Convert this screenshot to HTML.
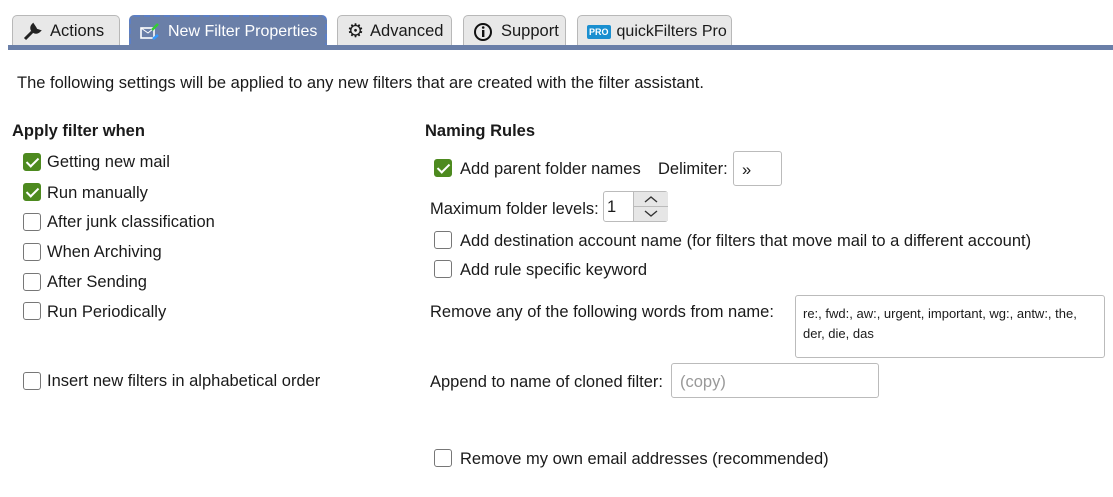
<!DOCTYPE html><html><head><style>
body{margin:0;width:1113px;height:497px;background:#fff;font-family:"Liberation Sans",sans-serif;font-size:16.5px;color:#1a1a1a;position:relative;overflow:hidden}
.a{position:absolute;white-space:nowrap}
.tab{position:absolute;top:15px;height:30px;border:1px solid #b8b8b8;border-bottom:none;border-radius:5px 5px 0 0;background:#e8e8e8;box-sizing:border-box;display:flex;align-items:center;padding-left:9px;padding-top:2px;gap:8px;font-size:16.5px}
.cb{position:absolute;width:18px;height:18px;border:1px solid #777;border-radius:3px;box-sizing:border-box;background:#fff}
.cb.on{background:#4d8a1f;border-color:#4d8a1f}
.cb.on:after{content:"";position:absolute;left:5px;top:1px;width:5px;height:10px;border:solid #fff;border-width:0 2.5px 2.5px 0;transform:rotate(45deg)}
.in{position:absolute;border:1px solid #bbb;border-radius:3px;box-sizing:border-box;background:#fff}
</style></head><body>
<div class="tab" style="left:12px;width:108px"><svg width="20" height="20" viewBox="0 0 20 20"><path d="M3 17l7-7M11 3a4 4 0 1 0 6 6l-3-1-1-2z" stroke="#222" stroke-width="3" fill="#222"/></svg>Actions</div>
<div class="tab" style="left:129px;width:198px;background:#6a7fa8;color:#fff;border:2px dashed #5b7fc7;border-bottom:none;font-size:16px"><svg width="20" height="18" viewBox="0 0 20 18"><rect x="1" y="5" width="13" height="10" fill="none" stroke="#fff" stroke-width="1.6"/><path d="M1 5l7 5 6-5" stroke="#fff" fill="none"/><path d="M12 7l6-6" stroke="#3c3" stroke-width="2.5"/><path d="M13 16l5-4" stroke="#39f" stroke-width="2.5"/></svg>New Filter Properties</div>
<div class="tab" style="left:337px;width:115px;gap:6px"><span style="font-size:19px">⚙</span>Advanced</div>
<div class="tab" style="left:463px;width:103px"><svg width="20" height="20"><circle cx="10" cy="10" r="8" fill="none" stroke="#111" stroke-width="2"/><rect x="9" y="8" width="2.4" height="7" fill="#111"/><circle cx="10.2" cy="5.5" r="1.3" fill="#111"/></svg>Support</div>
<div class="tab" style="left:577px;width:155px;gap:6px;font-size:16px"><span style="background:#1a8fd0;color:#fff;font-size:9px;font-weight:bold;padding:2px 2px;border-radius:2px">PRO</span>quickFilters Pro</div>
<div class="a" style="left:8px;top:45px;width:1105px;height:5px;background:#6a7fa8"></div>
<div class="a" style="left:17px;top:74px">The following settings will be applied to any new filters that are created with the filter assistant.</div>
<div class="a" style="left:12px;top:122px;font-weight:bold">Apply filter when</div>
<div class="cb on" style="left:23px;top:153px"></div><div class="a" style="left:47px;top:153px">Getting new mail</div>
<div class="cb on" style="left:23px;top:183px"></div><div class="a" style="left:47px;top:184px">Run manually</div>
<div class="cb" style="left:23px;top:213px"></div><div class="a" style="left:47px;top:213px">After junk classification</div>
<div class="cb" style="left:23px;top:243px"></div><div class="a" style="left:47px;top:243px">When Archiving</div>
<div class="cb" style="left:23px;top:273px"></div><div class="a" style="left:47px;top:273px">After Sending</div>
<div class="cb" style="left:23px;top:302px"></div><div class="a" style="left:47px;top:303px">Run Periodically</div>
<div class="cb" style="left:23px;top:372px"></div><div class="a" style="left:47px;top:372px">Insert new filters in alphabetical order</div>
<div class="a" style="left:425px;top:122px;font-weight:bold">Naming Rules</div>
<div class="cb on" style="left:434px;top:159px"></div><div class="a" style="left:460px;top:160px">Add parent folder names</div>
<div class="a" style="left:658px;top:160px">Delimiter:</div>
<div class="in" style="left:733px;top:151px;width:49px;height:35px"><span class="a" style="left:8px;top:9px">»</span></div>
<div class="a" style="left:430px;top:200px">Maximum folder levels:</div>
<div class="in" style="left:603px;top:191px;width:65px;height:31px"><span class="a" style="left:3px;top:6px">1</span><div class="a" style="left:29px;top:0;width:34px;height:29px;background:#e6e6e6;border-left:1px solid #bbb"><svg width="34" height="29"><path d="M11 10l6-5 6 5M11 19l6 5 6-5" stroke="#333" stroke-width="1.4" fill="none"/><path d="M0 14.5h34" stroke="#bbb"/></svg></div></div>
<div class="cb" style="left:434px;top:231px"></div><div class="a" style="left:460px;top:232px">Add destination account name (for filters that move mail to a different account)</div>
<div class="cb" style="left:434px;top:260px"></div><div class="a" style="left:460px;top:261px">Add rule specific keyword</div>
<div class="a" style="left:430px;top:303px">Remove any of the following words from name:</div>
<div class="in" style="left:795px;top:295px;width:310px;height:63px;font-size:13px;padding:8px 7px;line-height:20px;white-space:normal">re:, fwd:, aw:, urgent, important, wg:, antw:, the, der, die, das</div>
<div class="a" style="left:430px;top:373px">Append to name of cloned filter:</div>
<div class="in" style="left:671px;top:363px;width:208px;height:35px"><span class="a" style="left:8px;top:9px;color:#999">(copy)</span></div>
<div class="cb" style="left:434px;top:449px"></div><div class="a" style="left:460px;top:450px">Remove my own email addresses (recommended)</div>
</body></html>
